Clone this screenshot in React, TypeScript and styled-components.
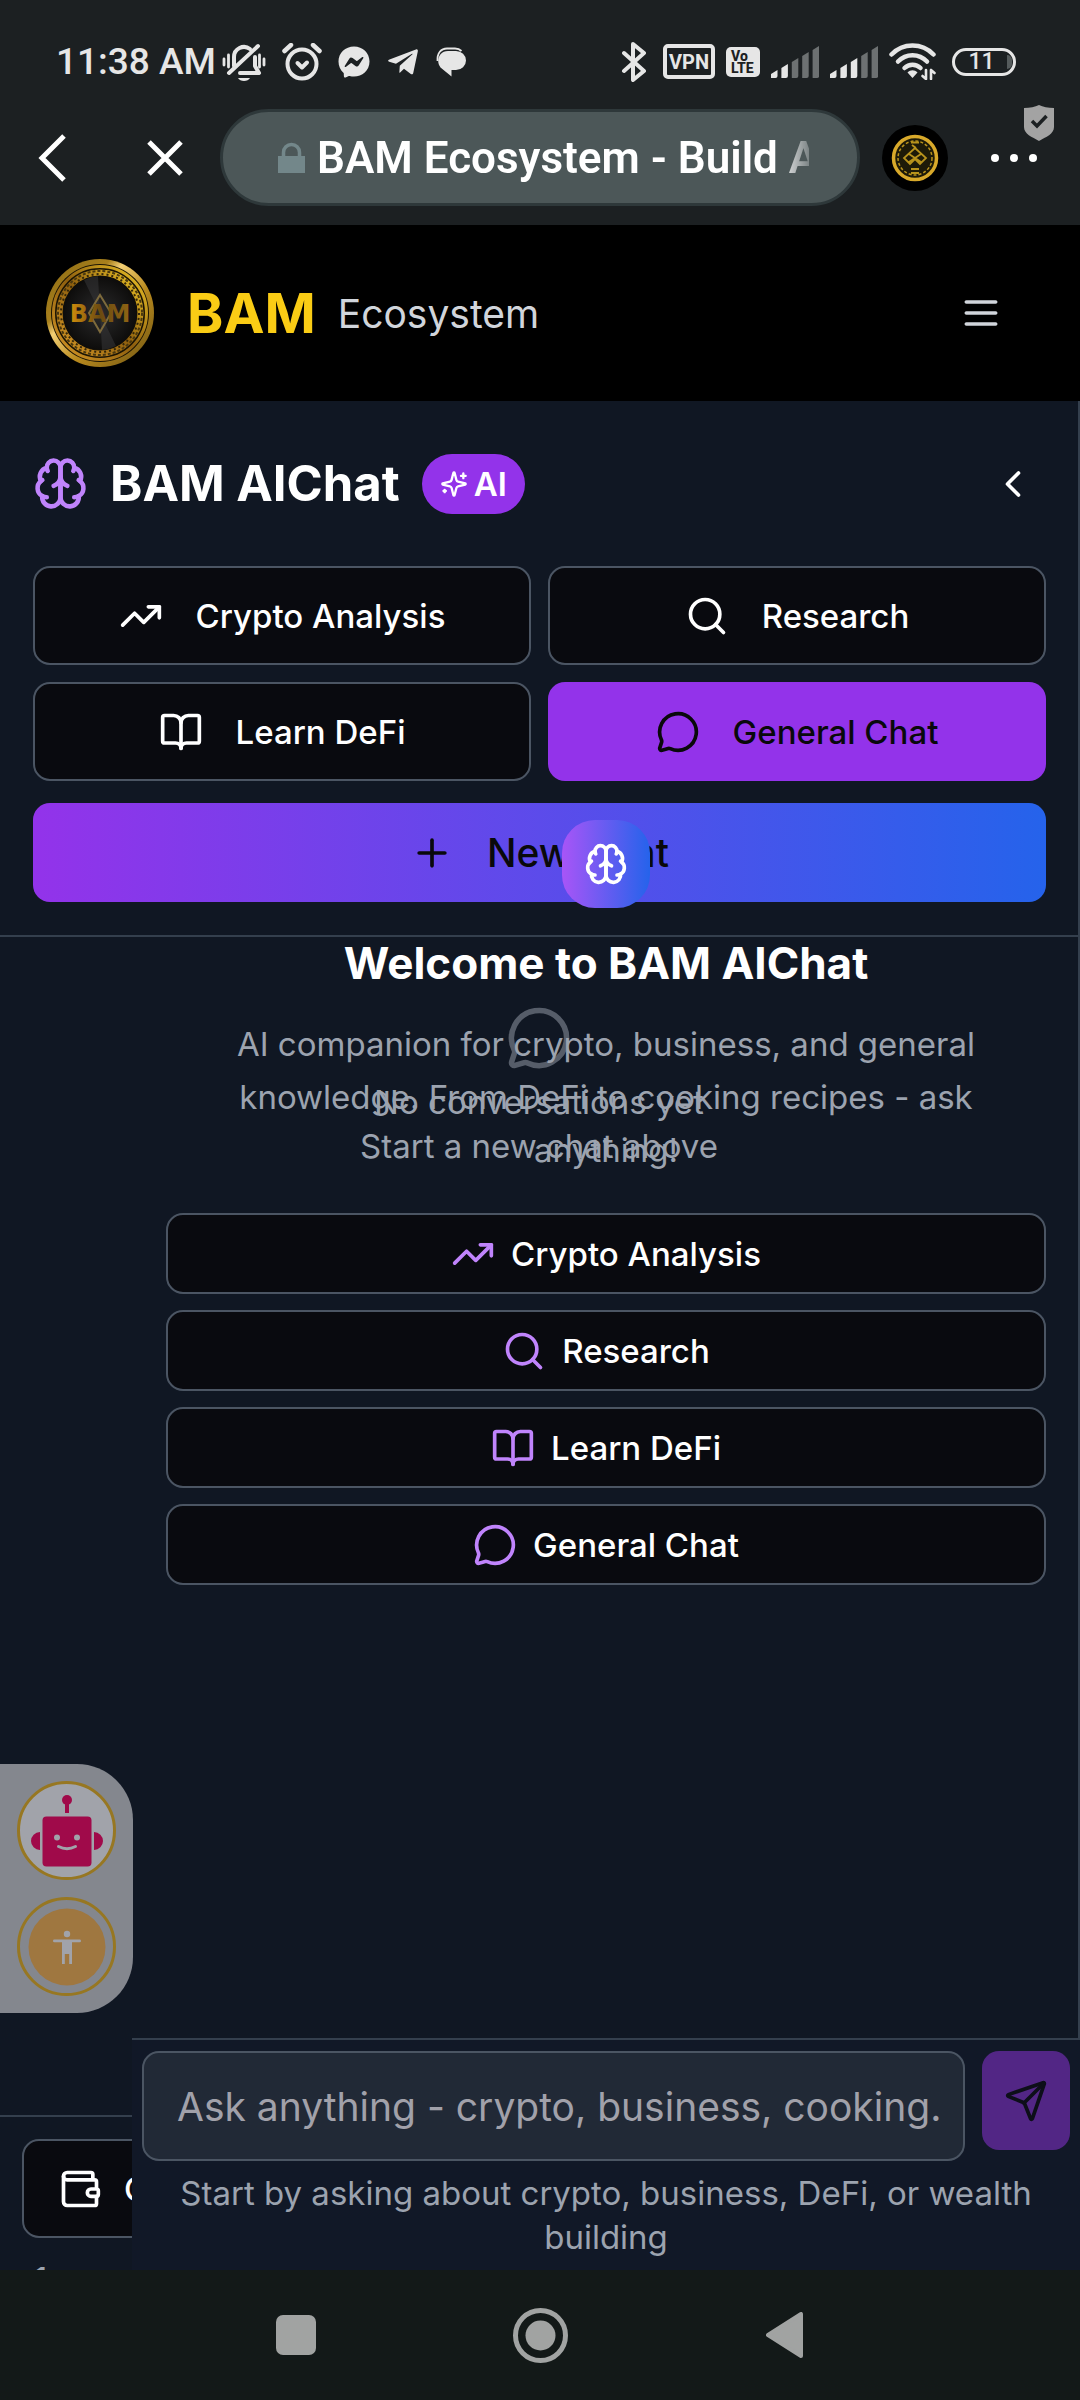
import React from 'react';
import styled, { createGlobalStyle, css } from 'styled-components';
import { BookOpen, ChevronLeft, MessageCircle, Plus, Search, Send, TrendingUp } from 'lucide-react';
import { FaFacebookMessenger, FaTelegramPlane } from 'react-icons/fa';

const colors = {
  chrome: '#1c2022',
  status: '#e6e6e6',
  page: '#101723',
  footer: '#111827',
  tile: '#090a0f',
  line: '#343f4d',
  outline: '#4b5563',
  violet: '#9333ea',
  lilac: '#c084fc',
  muted: '#9ca3af',
  ink: '#09090b',
};

const GlobalStyle = createGlobalStyle`
  *, *::before, *::after { box-sizing: border-box; }
  body { margin: 0; background: ${colors.page}; font-family: Inter, "Noto Sans", sans-serif; color: #fff; }
  button { font: inherit; color: inherit; border: 0; padding: 0; background: none; cursor: pointer; }
  h1, h2, p { margin: 0; }
  svg { display: block; flex: none; }
`;

const Screen = styled.div`
  display: flex;
  flex-direction: column;
  min-height: 100vh;
`;

/* ---------- Phone status bar ---------- */

const StatusBar = styled.div`
  display: flex;
  align-items: center;
  justify-content: space-between;
  padding: 38px 64px 24px 56px;
  background: ${colors.chrome};
  color: ${colors.status};
  font-family: Roboto, sans-serif;
`;

const StatusGroup = styled.div<{ $gap: number }>`
  display: flex;
  align-items: center;
  gap: ${(p) => p.$gap}px;
  height: 47px;
`;

const Clock = styled.span`
  font-size: 37px;
  font-weight: 500;
  white-space: nowrap;
`;

const VpnTag = styled.span`
  display: grid;
  place-items: center;
  width: 52px;
  height: 35px;
  border: 4px solid ${colors.status};
  border-radius: 5px;
  font-size: 20px;
  font-weight: 700;
  line-height: 1;
`;

const VolteTag = styled.span`
  display: flex;
  flex-direction: column;
  justify-content: center;
  width: 34px;
  height: 30px;
  padding-left: 5px;
  border-radius: 5px;
  background: ${colors.status};
  color: ${colors.chrome};
  font-size: 14px;
  font-weight: 800;
  line-height: 12px;
`;

const Battery = styled.span`
  display: flex;
  align-items: center;
  justify-content: center;
  gap: 12px;
  width: 64px;
  height: 28px;
  padding-left: 12px;
  border: 3px solid ${colors.status};
  border-radius: 14px;
  font-size: 23px;
  font-weight: 500;
  line-height: 1;

  &::after {
    content: '';
    width: 5px;
    height: 14px;
    border-radius: 0 5px 5px 0;
    background: #555b5c;
  }
`;

const BellOffIcon = () => (
  <svg width="44" height="40" viewBox="0 0 44 40" fill="none" stroke={colors.status} strokeWidth="4" strokeLinecap="round" strokeLinejoin="round">
    <path d="M12 24V15a10 10 0 0 1 16-8" />
    <path d="M33 15v9l4 7H18" />
    <path d="M7 31 36 4" />
    <path d="M16 36h12c-2 4-10 4-12 0Z" fill={colors.status} stroke="none" />
    <path d="M2 17v6M6.500 13v12M37.500 13v12M42 17v6" strokeWidth="2.800" />
  </svg>
);

const AlarmIcon = () => (
  <svg width="40" height="38" viewBox="0 0 40 38" fill="none" stroke={colors.status} strokeLinecap="round" strokeLinejoin="round">
    <circle cx="20" cy="21" r="14.500" strokeWidth="4" />
    <path d="m2.500 8 6.500-6M37.500 8 31 2" strokeWidth="4.500" />
    <path d="m15.500 20 4.500 4.500 5-5" strokeWidth="4" />
  </svg>
);

const SpeechIcon = () => (
  <svg width="30" height="30" viewBox="0 0 30 30" fill={colors.status}>
    <path d="M12 4h8a10 9.500 0 0 1 0 19h-4.500v6.500L4.500 20.500C-.5 14 3 4 12 4Z" />
    <path d="M1.500 14C1 6 5 1.500 11 1.500h8c3 0 5 1 6.500 2.500" fill="none" stroke={colors.status} strokeWidth="1.800" />
  </svg>
);

const BluetoothIcon = () => (
  <svg width="26" height="40" viewBox="0 0 26 40" fill="none" stroke={colors.status} strokeWidth="4" strokeLinejoin="round" strokeLinecap="round">
    <path d="m3 11 20 18-11 9V2l11 9L3 29" />
  </svg>
);

const SignalIcon = ({ level }: { level: number }) => (
  <svg width="48" height="32" viewBox="0 0 48 32">
    {[8, 14, 20, 26, 32].map((h, i) => (
      <path
        key={h}
        d={`M${i * 10.4} 32V${32 - h + 4}l6.500-4V30q0 2-2 2Z`}
        fill={i < level ? colors.status : '#6d7172'}
      />
    ))}
  </svg>
);

const WifiIcon = () => (
  <svg width="47" height="37" viewBox="0 0 47 37" fill="none" stroke={colors.status} strokeWidth="4.500" strokeLinecap="round">
    <path d="M2.500 11.500C14-.5 33-.5 44.500 11.500" />
    <path d="M9 18.500c8-8.500 21-8.500 29 0" />
    <path d="M15.500 25c4.500-4.500 11.500-4.500 16 0" />
    <path d="M18.500 29.500 23.500 35l5-5.500c-3-3-7-3-10 0Z" fill={colors.status} stroke="none" />
    <path d="M37 36V27m-3.500 6L37 36M42 27v9M42 27l3.500 3" strokeWidth="2.600" />
  </svg>
);

/* ---------- Browser toolbar ---------- */

const Toolbar = styled.div`
  display: flex;
  align-items: center;
  padding: 0 38px 19px 30px;
  background: ${colors.chrome};
  font-family: Roboto, sans-serif;
`;

const ToolButton = styled.button<{ $width: number }>`
  position: relative;
  display: grid;
  place-items: center;
  width: ${(p) => p.$width}px;
  height: 66px;
`;

const CloseTab = styled(ToolButton)`
  margin: 0 33px 0 69px;
`;

const AddressPill = styled.button`
  display: flex;
  flex: 1;
  align-items: center;
  gap: 12px;
  min-width: 0;
  height: 97px;
  padding: 0 48px 0 55px;
  border: 3px solid #2e383a;
  border-radius: 49px;
  background: #4c5758;
  color: #fff;
`;

const PageTitle = styled.span`
  flex: 1;
  overflow: hidden;
  font-size: 44px;
  font-weight: 600;
  line-height: 56px;
  text-align: left;
  white-space: nowrap;
  mask-image: linear-gradient(to right, #000 calc(100% - 32px), transparent calc(100% + 12px));
`;

const SiteCoin = styled.button`
  display: grid;
  place-items: center;
  width: 66px;
  height: 66px;
  margin: 0 38px 0 22px;
  border-radius: 50%;
  background: #000;
`;

const ShieldBadge = styled.span`
  position: absolute;
  top: -20px;
  right: -12px;
`;

/* ---------- Site header ---------- */

const SiteHeader = styled.header`
  display: flex;
  align-items: center;
  padding: 34px 44px 34px 46px;
  background: #000;
`;

const BrandName = styled.h1`
  margin-left: 33px;
  color: #facc15;
  font-size: 55px;
  font-weight: 700;
  line-height: 66px;
`;

const BrandSuffix = styled.span`
  margin-left: 22px;
  color: #d1d5db;
  font-size: 39px;
  line-height: 55px;
`;

const MenuButton = styled.button`
  display: grid;
  place-items: center;
  width: 110px;
  height: 99px;
  margin-left: auto;
  color: #d1d5db;
`;

const CoinLogo = () => (
  <svg width="108" height="108" viewBox="0 0 108 108">
    <defs>
      <linearGradient id="rim" x1="0" y1="0" x2="1" y2="1">
        <stop offset="0" stopColor="#8a6a14" />
        <stop offset=".3" stopColor="#a8801c" />
        <stop offset=".38" stopColor="#f3cf74" />
        <stop offset=".6" stopColor="#b98a1e" />
        <stop offset="1" stopColor="#6e5412" />
      </linearGradient>
      <linearGradient id="ring" x1="0" y1="1" x2="1" y2="0">
        <stop offset="0" stopColor="#d99a28" />
        <stop offset=".5" stopColor="#8e5f0e" />
        <stop offset="1" stopColor="#f2c928" />
      </linearGradient>
      <radialGradient id="disc">
        <stop offset="0" stopColor="#2b2b2c" />
        <stop offset="1" stopColor="#0d0c0b" />
      </radialGradient>
      <linearGradient id="letters" x1="0" y1="0" x2="1" y2="0">
        <stop offset="0" stopColor="#d48f0c" />
        <stop offset=".5" stopColor="#6b4a10" />
        <stop offset="1" stopColor="#8f6414" />
      </linearGradient>
    </defs>
    <circle cx="54" cy="54" r="54" fill="url(#rim)" />
    <circle cx="54" cy="54" r="49" fill="#1b1404" />
    <circle cx="54" cy="54" r="46.500" fill="none" stroke="url(#ring)" strokeWidth="3" />
    <circle cx="54" cy="54" r="40.500" fill="none" stroke="url(#ring)" strokeWidth="6" />
    <circle cx="54" cy="54" r="42" fill="none" stroke="#4a380f" strokeWidth="2" strokeDasharray="3 2" />
    <circle cx="54" cy="54" r="39" fill="none" stroke="#33260a" strokeWidth="2" strokeDasharray="2 3" />
    <circle cx="54" cy="54" r="37" fill="url(#disc)" />
    <path d="M54 54 38 21a37 37 0 0 1 14-4ZM54 54l16 33a37 37 0 0 1-14 4Z" fill="#3a3a3b" opacity=".5" />
    <path d="m54 36 11 18-11 19-11-19Z" fill="none" stroke="#7d6a3c" strokeWidth="2" />
    <text x="54" y="63" textAnchor="middle" fontFamily="DejaVu Sans, sans-serif" fontWeight="700" fontSize="24" fill="url(#letters)">BAM</text>
  </svg>
);

const SmallCoin = () => (
  <svg width="48" height="48" viewBox="0 0 48 48" fill="none" stroke="#b8931c">
    <circle cx="24" cy="24" r="21.500" fill="#1d1a08" stroke="#d8a92a" strokeWidth="3.500" />
    <circle cx="24" cy="24" r="17" strokeWidth="1.500" strokeDasharray="3 2" />
    <path d="m24 14 11 10-6 6-5-5-5 5-6-6ZM18 20l12 8m0-8-12 8M21 11l4 3" strokeWidth="1.800" />
    <path d="M20 8.500h8M20 35h8M20 39h8" strokeWidth="2" />
  </svg>
);

const BrainIcon = ({ size }: { size: number }) => (
  <svg width={size} height={size} viewBox="0 0 24 24" fill="none" stroke="currentColor" strokeWidth="2" strokeLinecap="round" strokeLinejoin="round">
    <path d="M12 5a3 3 0 1 0-5.997.125 4 4 0 0 0-2.526 5.770 4 4 0 0 0 .556 6.588A4 4 0 1 0 12 18Z" />
    <path d="M12 5a3 3 0 1 1 5.997.125 4 4 0 0 1 2.526 5.770 4 4 0 0 1-.556 6.588A4 4 0 1 1 12 18Z" />
    <path d="M15 13a4.500 4.500 0 0 1-3-4 4.500 4.500 0 0 1-3 4" />
    <path d="M17.599 6.500a3 3 0 0 0 .399-1.375M6.003 5.125A3 3 0 0 0 6.401 6.500" />
    <path d="M3.477 10.896a4 4 0 0 1 .585-.396M19.938 10.500a4 4 0 0 1 .585.396" />
    <path d="M6 18a4 4 0 0 1-1.967-.516M19.967 17.484A4 4 0 0 1 18 18" />
  </svg>
);

const SparklesIcon = () => (
  <svg width="28" height="28" viewBox="0 0 24 24" fill="none" stroke="currentColor" strokeWidth="2" strokeLinecap="round" strokeLinejoin="round">
    <path d="M9.937 15.500A2 2 0 0 0 8.500 14.063l-6.135-1.582a.5.5 0 0 1 0-.962L8.500 9.936A2 2 0 0 0 9.937 8.500l1.582-6.135a.5.5 0 0 1 .963 0L14.063 8.500A2 2 0 0 0 15.500 9.937l6.135 1.581a.5.5 0 0 1 0 .964L15.500 14.063a2 2 0 0 0-1.437 1.437l-1.582 6.135a.5.5 0 0 1-.963 0Z" />
    <path d="M20 3v4M22 5h-4M4 17v2M5 18H3" />
  </svg>
);

const WalletIcon = () => (
  <svg width="44" height="44" viewBox="0 0 24 24" fill="none" stroke="currentColor" strokeWidth="2" strokeLinecap="round" strokeLinejoin="round">
    <path d="M19 7V4a1 1 0 0 0-1-1H5a2 2 0 0 0 0 4h15a1 1 0 0 1 1 1v4h-3a2 2 0 0 0 0 4h3a1 1 0 0 0 1-1v-2a1 1 0 0 0-1-1" />
    <path d="M3 5v14a2 2 0 0 0 2 2h15a1 1 0 0 0 1-1v-4" />
  </svg>
);

/* ---------- Workspace: the sidebar and the chat share one grid cell ---------- */

const Workspace = styled.div`
  position: relative;
  display: grid;
  grid-template: minmax(0, 1fr) / minmax(0, 1fr);
  flex: 1;
  overflow: hidden;
`;

const Sidebar = styled.aside`
  display: flex;
  flex-direction: column;
  grid-area: 1 / 1;
  border-right: 2px solid ${colors.line};
`;

const SidebarTop = styled.div`
  padding: 33px 32px 33px 33px;
  border-bottom: 2px solid ${colors.line};
`;

const SidebarHead = styled.div`
  display: flex;
  align-items: center;
  height: 99px;
  margin-bottom: 33px;
  color: ${colors.lilac};
`;

const SidebarTitle = styled.h2`
  margin: 0 22px;
  color: #fff;
  font-size: 49px;
  font-weight: 700;
  line-height: 66px;
`;

const AiBadge = styled.span`
  display: flex;
  align-items: center;
  gap: 6px;
  height: 60px;
  padding: 0 18px;
  border-radius: 30px;
  background: ${colors.violet};
  color: #fff;
  font-size: 33px;
  font-weight: 600;
`;

const CollapseButton = styled.button`
  display: grid;
  place-items: center;
  width: 66px;
  height: 99px;
  margin-left: auto;
  color: #fff;
`;

const ModeGrid = styled.div`
  display: grid;
  grid-template-columns: 1fr 1fr;
  gap: 17px;
`;

const outlined = css`
  border: 2px solid ${colors.outline};
  background: ${colors.tile};
  color: #fff;
`;

const ModeButton = styled.button<{ $active?: boolean }>`
  display: flex;
  align-items: center;
  justify-content: center;
  gap: 33px;
  height: 99px;
  border-radius: 17px;
  font-size: 33px;
  font-weight: 500;
  ${(p) =>
    p.$active
      ? css`
          background: ${colors.violet};
          color: ${colors.ink};
        `
      : outlined}
`;

const NewChatButton = styled(ModeButton)`
  width: 100%;
  margin-top: 22px;
  background: linear-gradient(to right, ${colors.violet}, #2563eb);
  font-size: 39px;
`;

const EmptyList = styled.div`
  display: flex;
  flex: 1;
  flex-direction: column;
  align-items: center;
  padding-top: 68px;
  color: ${colors.muted};
  font-size: 33px;
  line-height: 44px;

  svg {
    margin-bottom: 9px;
    opacity: 0.5;
  }
`;

const SidebarFoot = styled.div`
  padding: 22px 22px 0;
  border-top: 2px solid ${colors.line};
`;

const WalletButton = styled.button`
  display: flex;
  align-items: center;
  gap: 22px;
  width: 100%;
  height: 99px;
  padding-left: 34px;
  border-radius: 17px;
  font-size: 33px;
  font-weight: 500;
  ${outlined}
`;

const FootNote = styled.p`
  height: 32px;
  padding: 17px 12px 0;
  overflow: hidden;
  color: ${colors.muted};
  font-size: 33px;
  line-height: 48px;
`;

const ChatPane = styled.main`
  display: flex;
  flex-direction: column;
  grid-area: 1 / 1;
  margin-left: 132px;
`;

const Welcome = styled.section`
  display: flex;
  flex: 1;
  flex-direction: column;
  align-items: center;
  justify-content: center;
  padding: 0 34px 34px;
`;

const BrainButton = styled.button`
  display: grid;
  place-items: center;
  width: 88px;
  height: 88px;
  border-radius: 33px;
  background: linear-gradient(to right, #a855f7, #2563eb);
  color: #fff;
`;

const WelcomeTitle = styled.h2`
  margin: 22px 0;
  font-size: 44px;
  font-weight: 700;
  line-height: 66px;
`;

const WelcomeText = styled.p`
  max-width: 820px;
  color: ${colors.muted};
  font-size: 33px;
  line-height: 53px;
  text-align: center;
`;

const QuickList = styled.div`
  display: flex;
  flex-direction: column;
  gap: 16px;
  width: 100%;
  margin-top: 36px;
`;

const QuickButton = styled.button`
  display: flex;
  align-items: center;
  justify-content: center;
  gap: 16px;
  height: 81px;
  border-radius: 17px;
  font-size: 33px;
  font-weight: 500;
  ${outlined}

  svg {
    color: ${colors.lilac};
  }
`;

const Composer = styled.form`
  padding: 11px 10px;
  border-top: 2px solid ${colors.line};
  background: ${colors.footer};
`;

const ComposerRow = styled.div`
  display: flex;
  align-items: flex-start;
  gap: 17px;
`;

const MessageInput = styled.input`
  flex: 1;
  min-width: 0;
  height: 110px;
  padding: 0 20px 0 33px;
  border: 2px solid ${colors.outline};
  border-radius: 17px;
  background: #212936;
  color: #fff;
  font: 39px Inter, sans-serif;

  &::placeholder {
    color: #a1a1aa;
    opacity: 1;
  }
`;

const SendButton = styled.button`
  display: grid;
  place-items: center;
  width: 88px;
  height: 99px;
  border-radius: 17px;
  background: #522685;
  color: #0d0f19;
`;

const Hint = styled.p`
  padding: 10px 11px 0;
  color: ${colors.muted};
  font-size: 33px;
  line-height: 44px;
  text-align: center;
`;

/* ---------- Floating assistant dock ---------- */

const Dock = styled.div`
  position: absolute;
  bottom: 257px;
  left: 0;
  display: flex;
  flex-direction: column;
  gap: 17px;
  padding: 17px;
  border-radius: 0 56px 56px 0;
  background: #84878e;
`;

const DockButton = styled.button<{ $filled?: boolean }>`
  display: grid;
  place-items: center;
  width: 99px;
  height: 99px;
  border: 3px solid #977722;
  border-radius: 50%;
  background: ${(p) => (p.$filled ? '#a1a3aa' : 'transparent')};
`;

const RobotIcon = () => (
  <svg width="72" height="72" viewBox="0 0 72 72" fill="#a00a4a">
    <circle cx="36" cy="5" r="5" />
    <path d="M34 8h4v10h-4z" />
    <path d="M9 37a9 9 0 0 0 0 18ZM63 37a9 9 0 0 1 0 18Z" />
    <rect x="11.500" y="21.500" width="49" height="50" rx="4" />
    <circle cx="26" cy="42.500" r="3" fill="#a1a3aa" />
    <circle cx="46" cy="42.500" r="3" fill="#a1a3aa" />
    <path d="M27.500 51.500q8.500 4.500 17 0" fill="none" stroke="#a1a3aa" strokeWidth="3" strokeLinecap="round" />
  </svg>
);

const AccessibilityIcon = () => (
  <svg width="78" height="78" viewBox="0 0 78 78">
    <circle cx="39" cy="39" r="38.500" fill="#9f7740" />
    <g fill="#a1a3aa">
      <circle cx="39" cy="26" r="3.200" />
      <rect x="25" y="31.500" width="28" height="2.800" rx="1.400" />
      <path d="M34 33h10v23h-2.800V46h-4.400v10H34Z" />
    </g>
  </svg>
);

/* ---------- Phone navigation bar ---------- */

const NavBar = styled.nav`
  display: flex;
  align-items: center;
  justify-content: center;
  gap: 189px;
  height: 130px;
  background: #131918;
`;

const NavButton = styled.button`
  display: grid;
  place-items: center;
  width: 55px;
  height: 55px;
`;

const modes = [
  { label: 'Crypto Analysis', Icon: TrendingUp },
  { label: 'Research', Icon: Search },
  { label: 'Learn DeFi', Icon: BookOpen },
  { label: 'General Chat', Icon: MessageCircle },
];

export default function App() {
  return (
    <Screen>
      <GlobalStyle />
      <StatusBar>
        <StatusGroup $gap={6}>
          <Clock>11:38 AM</Clock>
          <StatusGroup $gap={16}>
            <BellOffIcon />
            <AlarmIcon />
            <FaFacebookMessenger size={32} />
            <FaTelegramPlane size={34} />
            <SpeechIcon />
          </StatusGroup>
        </StatusGroup>
        <StatusGroup $gap={16}>
          <BluetoothIcon />
          <StatusGroup $gap={11}>
            <VpnTag>VPN</VpnTag>
            <VolteTag>
              <span>Vo</span>
              <span>LTE</span>
            </VolteTag>
            <SignalIcon level={2} />
            <SignalIcon level={3} />
            <WifiIcon />
          </StatusGroup>
          <Battery>11</Battery>
        </StatusGroup>
      </StatusBar>

      <Toolbar>
        <ToolButton $width={44} aria-label="Back">
          <svg width="28" height="48" viewBox="0 0 28 48" fill="none" stroke="#fff" strokeWidth="5">
            <path d="M26 2 4 24l22 22" />
          </svg>
        </ToolButton>
        <CloseTab $width={44} aria-label="Close">
          <svg width="36" height="36" viewBox="0 0 36 36" stroke="#fff" strokeWidth="5">
            <path d="m2 2 32 32M34 2 2 34" />
          </svg>
        </CloseTab>
        <AddressPill>
          <svg width="27" height="32" viewBox="0 0 27 32">
            <path d="M5.500 15V10.500a8 8 0 0 1 16 0V15" fill="none" stroke="#73878a" strokeWidth="3.500" />
            <path d="M0 14h27v17H0z" fill="#73878a" />
          </svg>
          <PageTitle>BAM Ecosystem - Build A</PageTitle>
        </AddressPill>
        <SiteCoin aria-label="Site">
          <SmallCoin />
        </SiteCoin>
        <ToolButton $width={56} aria-label="More">
          <svg width="46" height="10" viewBox="0 0 46 10" fill="#fff">
            <circle cx="4" cy="5" r="4" />
            <circle cx="23" cy="5" r="4" />
            <circle cx="42" cy="5" r="4" />
          </svg>
          <ShieldBadge>
            <svg width="30" height="36" viewBox="0 0 30 36">
              <path d="M15 0c4 2 9 3 15 3v19c0 7-8 10-15 14C8 32 0 29 0 22V3c6 0 11-1 15-3Z" fill="#a3a3a3" />
              <path d="m8 16 5 5 9.500-10" fill="none" stroke={colors.chrome} strokeWidth="3.500" />
            </svg>
          </ShieldBadge>
        </ToolButton>
      </Toolbar>

      <SiteHeader>
        <CoinLogo />
        <BrandName>BAM</BrandName>
        <BrandSuffix>Ecosystem</BrandSuffix>
        <MenuButton aria-label="Menu">
          <svg width="44" height="44" viewBox="0 0 24 24" stroke="currentColor" strokeWidth="2" strokeLinecap="round">
            <path d="M4 6h16M4 12h16M4 18h16" />
          </svg>
        </MenuButton>
      </SiteHeader>

      <Workspace>
        <Sidebar>
          <SidebarTop>
            <SidebarHead>
              <BrainIcon size={55} />
              <SidebarTitle>BAM AIChat</SidebarTitle>
              <AiBadge>
                <SparklesIcon />
                AI
              </AiBadge>
              <CollapseButton aria-label="Collapse">
                <ChevronLeft size={44} />
              </CollapseButton>
            </SidebarHead>
            <ModeGrid>
              {modes.map(({ label, Icon }) => (
                <ModeButton key={label} $active={label === 'General Chat'}>
                  <Icon size={44} />
                  {label}
                </ModeButton>
              ))}
            </ModeGrid>
            <NewChatButton $active>
              <Plus size={44} />
              New Chat
            </NewChatButton>
          </SidebarTop>
          <EmptyList>
            <MessageCircle size={66} />
            <p>No conversations yet</p>
            <p>Start a new chat above</p>
          </EmptyList>
          <SidebarFoot>
            <WalletButton>
              <WalletIcon />C
            </WalletButton>
            <FootNote>1</FootNote>
          </SidebarFoot>
        </Sidebar>

        <ChatPane>
          <Welcome>
            <BrainButton aria-label="Assistant">
              <BrainIcon size={44} />
            </BrainButton>
            <WelcomeTitle>Welcome to BAM AIChat</WelcomeTitle>
            <WelcomeText>
              AI companion for crypto, business, and general knowledge. From DeFi to cooking recipes - ask anything!
            </WelcomeText>
            <QuickList>
              {modes.map(({ label, Icon }) => (
                <QuickButton key={label}>
                  <Icon size={44} />
                  {label}
                </QuickButton>
              ))}
            </QuickList>
          </Welcome>
          <Composer onSubmit={(e) => e.preventDefault()}>
            <ComposerRow>
              <MessageInput aria-label="Message" placeholder="Ask anything - crypto, business, cooking." />
              <SendButton aria-label="Send">
                <Send size={44} />
              </SendButton>
            </ComposerRow>
            <Hint>Start by asking about crypto, business, DeFi, or wealth building</Hint>
          </Composer>
        </ChatPane>

        <Dock>
          <DockButton $filled aria-label="Chat bot">
            <RobotIcon />
          </DockButton>
          <DockButton aria-label="Accessibility">
            <AccessibilityIcon />
          </DockButton>
        </Dock>
      </Workspace>

      <NavBar>
        <NavButton aria-label="Recent apps">
          <svg width="40" height="40" viewBox="0 0 40 40" fill="#a1a3a2">
            <rect width="40" height="40" rx="7" />
          </svg>
        </NavButton>
        <NavButton aria-label="Home">
          <svg width="55" height="55" viewBox="0 0 55 55" fill="#a1a3a2">
            <circle cx="27.500" cy="27.500" r="25" fill="none" stroke="#a1a3a2" strokeWidth="5" />
            <circle cx="27.500" cy="27.500" r="15" />
          </svg>
        </NavButton>
        <NavButton aria-label="Back">
          <svg width="37" height="46" viewBox="0 0 37 46" fill="#a1a3a2" stroke="#a1a3a2" strokeWidth="4" strokeLinejoin="round">
            <path d="M35 2v42L2 23Z" />
          </svg>
        </NavButton>
      </NavBar>
    </Screen>
  );
}
